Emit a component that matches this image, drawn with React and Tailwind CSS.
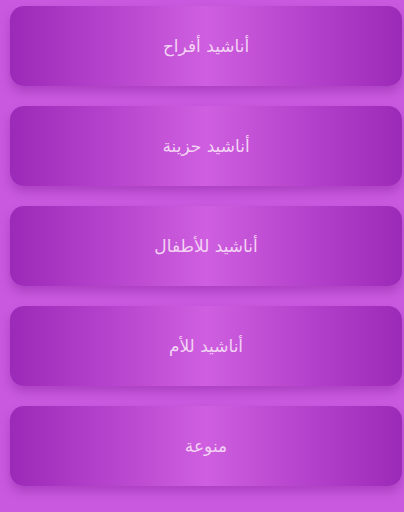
const items = ["أناشيد أفراح", "أناشيد حزينة", "أناشيد للأطفال", "أناشيد للأم", "منوعة"];

export default function App() {
  return (
    <div className="w-[404px] h-[512px] overflow-hidden bg-[#c95ae0] pt-[6px] pl-[10px] pr-[2px] flex flex-col gap-[20px]">
      {items.map((t) => (
        <button
          key={t}
          dir="rtl"
          className="h-[80px] w-full shrink-0 rounded-[14px] flex items-center justify-center pt-[2px] text-[17px] text-[#f3d3f4] bg-[linear-gradient(90deg,#9c2ab8_0%,#b543cc_25%,#cf5fe0_50%,#b543cc_75%,#9c2ab8_100%)] shadow-[0_6px_10px_rgba(120,20,140,0.35)]"
          style={{ fontFamily: '"DejaVu Sans", "Noto Sans", sans-serif' }}
        >
          {t}
        </button>
      ))}
    </div>
  );
}
